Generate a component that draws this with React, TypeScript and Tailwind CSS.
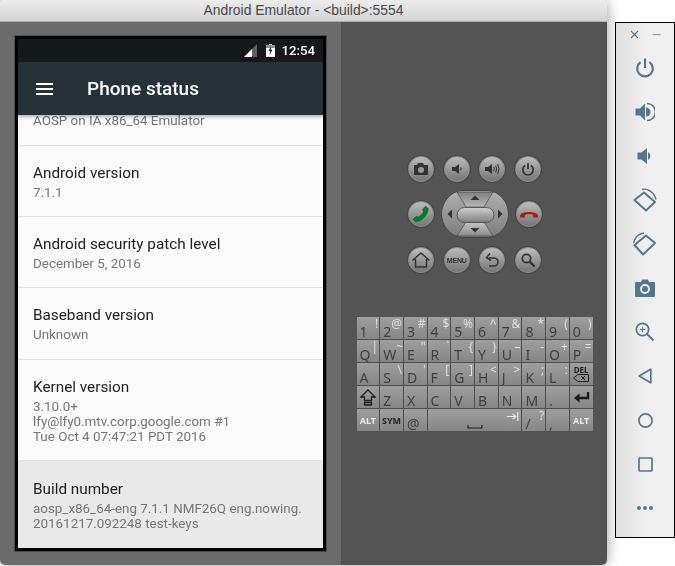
import React from "react";

const rows = [
  { t: "Android version", s: ["7.1.1"], h: "h-[71px]", bg: "" },
  { t: "Android security patch level", s: ["December 5, 2016"], h: "h-[71px]", bg: "" },
  { t: "Baseband version", s: ["Unknown"], h: "h-[72px]", bg: "" },
  { t: "Kernel version", s: ["3.10.0+", "lfy@lfy0.mtv.corp.google.com #1", "Tue Oct 4 07:47:21 PDT 2016"], h: "h-[101px]", bg: "" },
];

function Row({ t, s, h, bg }: { t: string; s: string[]; h: string; bg: string }) {
  return (
    <div className={`${h} ${bg} shrink-0 border-b border-[#e0e0e0] pl-[15px] pt-[16px]`}>
      <div className="text-[15.3px] leading-[22px] text-[#212121]">{t}</div>
      <div className="mt-[1px] text-[13.4px] leading-[15px] text-[#757575]">
        {s.map((l) => (
          <div key={l} className="whitespace-nowrap">{l}</div>
        ))}
      </div>
    </div>
  );
}

function Phone() {
  return (
    <div className="h-[515px] w-[311px] border-[3px] border-black ring-1 ring-[#4c4c4c] font-['Roboto',sans-serif] flex flex-col overflow-hidden bg-[#fafafa]">
      <div className="h-[23px] shrink-0 bg-[#15191c] flex items-center justify-end gap-[8px] pr-[8px] blur-[0.25px]">
        <svg width="14" height="14" viewBox="0 0 14 14">
          <path d="M0 13 L13 0 V13 Z" fill="#5a5f62" />
          <path d="M0 13 L8 5 V13 Z" fill="#fff" />
        </svg>
        <svg width="9" height="13" viewBox="0 0 9 13">
          <path d="M3 0 H6 V1 H9 V13 H0 V1 H3 Z" fill="#fff" />
          <path d="M0 1 H9 V4 H0 Z" fill="#8d9194" />
          <path d="M5 2 L2.6 7 H4.2 L3.6 11 L6.4 5.8 H4.8 Z" fill="#15191c" />
        </svg>
        <span className="text-[13.2px] font-medium text-white leading-none ml-[-1px]">12:54</span>
      </div>
      <div className="relative z-10 h-[53px] shrink-0 bg-[#263238] flex items-center shadow-[0_2px_3px_rgba(0,0,0,0.28)]">
        <div className="ml-[18px] w-[17px] flex flex-col gap-[3px]">
          <div className="h-[2px] bg-white" />
          <div className="h-[2px] bg-white" />
          <div className="h-[2px] bg-white" />
        </div>
        <div className="ml-[34px] pt-[2px] text-[19px] font-medium text-white blur-[0.25px]">Phone status</div>
      </div>
      <div className="blur-[0.25px] flex flex-col flex-1">
        <div className="h-[31px] shrink-0 border-b border-[#e0e0e0] pl-[15px] text-[13.4px] leading-[12px] text-[#757575]">
          AOSP on IA x86_64 Emulator
        </div>
        {rows.map((r) => (
          <Row key={r.t} {...r} />
        ))}
        <div className="flex-1 bg-[#e9e9e9] pl-[15px] pt-[17px]">
          <div className="text-[15.3px] leading-[22px] text-[#212121]">Build number</div>
          <div className="mt-[1px] text-[13.4px] leading-[15px] text-[#757575]">
            <div className="whitespace-nowrap">aosp_x86_64-eng 7.1.1 NMF26Q eng.nowing.</div>
            <div className="whitespace-nowrap">20161217.092248 test-keys</div>
          </div>
        </div>
      </div>
    </div>
  );
}

function Round({ children }: { children: React.ReactNode }) {
  return (
    <div className="h-[26px] w-[26px] shrink-0 rounded-full bg-linear-to-b from-[#bcbcbc] to-[#767676] border border-[#8e8e8e] shadow-[0_0_0_1px_#474747] flex items-center justify-center">
      {children}
    </div>
  );
}

const G = "#333333";

function DPad() {
  return (
    <svg width="68" height="48" viewBox="0 0 68 48" className="shrink-0">
      <defs>
        <linearGradient id="dpadBody" x1="0" y1="0" x2="0" y2="1">
          <stop offset="0" stopColor="#b0b0b0" />
          <stop offset="1" stopColor="#7c7c7c" />
        </linearGradient>
        <linearGradient id="dpadPill" x1="0" y1="0" x2="0" y2="1">
          <stop offset="0" stopColor="#cfcfcf" />
          <stop offset="1" stopColor="#7f7f7f" />
        </linearGradient>
        <linearGradient id="dpadTop" x1="0" y1="0" x2="0" y2="1">
          <stop offset="0" stopColor="#7e7e7e" />
          <stop offset="1" stopColor="#b9b9b9" />
        </linearGradient>
        <linearGradient id="dpadBot" x1="0" y1="0" x2="0" y2="1">
          <stop offset="0" stopColor="#c4c4c4" />
          <stop offset="1" stopColor="#8c8c8c" />
        </linearGradient>
      </defs>
      <path d="M22 0.5 H46 C58 0.5 67.5 12 67.5 24 C67.5 36 58 47.5 46 47.5 H22 C10 47.5 0.5 36 0.5 24 C0.5 12 10 0.5 22 0.5 Z" fill="url(#dpadBody)" stroke="#474747" />
      <path d="M16 2 H52 L43 17 H25 Z" fill="url(#dpadTop)" stroke="#474747" strokeWidth="0.7" />
      <path d="M25 32 H43 L52 46 H16 Z" fill="url(#dpadBot)" stroke="#474747" strokeWidth="0.7" />
      <rect x="16" y="17.5" width="37" height="15" rx="7.5" fill="url(#dpadPill)" stroke="#474747" strokeWidth="0.8" />
      <path d="M29.5 10 L34 5.5 L38.5 10 Z" fill={G} />
      <path d="M29.5 38 L38.5 38 L34 42.5 Z" fill={G} />
      <path d="M11 19.5 L11 28.5 L6.5 24 Z" fill={G} />
      <path d="M57 19.5 L61.5 24 L57 28.5 Z" fill={G} />
    </svg>
  );
}

function Controls() {
  return (
    <div className="flex flex-col items-center gap-[8px] blur-[0.3px]">
      <div className="flex gap-[9.6px]">
        <Round>
          <svg width="16" height="14" viewBox="0 0 16 14">
            <path d="M1 3 H4 L5 1 H10 L11 3 H15 V13 H1 Z" fill={G} />
            <circle cx="8" cy="8" r="3" fill="#9a9a9a" />
          </svg>
        </Round>
        <Round>
          <svg width="14" height="14" viewBox="0 0 14 14">
            <path d="M2 5 H5 L9 2 V12 L5 9 H2 Z" fill={G} />
            <path d="M10.5 5.5 Q11.7 7 10.5 8.5" stroke={G} strokeWidth="1.2" fill="none" />
          </svg>
        </Round>
        <Round>
          <svg width="17" height="14" viewBox="0 0 17 14">
            <path d="M1 5 H4 L8 2 V12 L4 9 H1 Z" fill={G} />
            <path d="M9.7 5 Q10.8 7 9.7 9 M11.7 3.5 Q13.5 7 11.7 10.5 M13.7 2 Q16.2 7 13.7 12" stroke={G} strokeWidth="1" fill="none" />
          </svg>
        </Round>
        <Round>
          <svg width="14" height="14" viewBox="0 0 14 14">
            <path d="M4.2 3.4 A5.2 5.2 0 1 0 9.8 3.4" stroke={G} strokeWidth="1.7" fill="none" />
            <path d="M7 1 V7" stroke={G} strokeWidth="1.7" />
          </svg>
        </Round>
      </div>
      <div className="flex items-center gap-[7px]">
        <Round>
          <svg width="20" height="20" viewBox="0 0 18 18">
            <path d="M13 1.5 L16 4 C15.5 10 10.5 15.5 4 16.5 L1.5 13.5 L5 10.5 L6.5 11.5 C8.5 10.5 10.5 8.5 11 6.5 L10 5 Z" fill="#0a7a2c" />
          </svg>
        </Round>
        <DPad />
        <Round>
          <svg width="20" height="10" viewBox="0 0 20 10">
            <path d="M1 7 C1 1.5 19 1.5 19 7 L19 8.5 L14.5 8.5 L13.5 5.5 C11 5 9 5 6.5 5.5 L5.5 8.5 L1 8.5 Z" fill="#ad1a1a" />
          </svg>
        </Round>
      </div>
      <div className="flex gap-[9.6px] mt-[1px]">
        <Round>
          <svg width="20" height="18" viewBox="0 0 20 18">
            <path d="M1.5 9.5 L10 2 L18.5 9.5 M4.5 8 V16 H15.5 V8" stroke={G} strokeWidth="1.5" fill="none" strokeLinejoin="round" />
          </svg>
        </Round>
        <Round>
          <span className="font-['Liberation_Sans',sans-serif] text-[7px] font-bold leading-none tracking-[-0.2px] text-[#333]">MENU</span>
        </Round>
        <Round>
          <svg width="16" height="16" viewBox="0 0 16 16">
            <path d="M5 6 H10 A4 4 0 0 1 10 14 H5" stroke={G} strokeWidth="1.6" fill="none" />
            <path d="M6 1.5 L2.5 5.5 L7 8.5" stroke={G} strokeWidth="1.6" fill="none" />
          </svg>
        </Round>
        <Round>
          <svg width="16" height="16" viewBox="0 0 16 16">
            <circle cx="6.5" cy="6.5" r="4.2" stroke={G} strokeWidth="1.8" fill="none" />
            <path d="M9.8 9.8 L14.5 14.5" stroke={G} strokeWidth="2.4" />
          </svg>
        </Round>
      </div>
    </div>
  );
}

function Key({ m, a, span, small, raw }: { m?: React.ReactNode; a?: React.ReactNode; span?: boolean; small?: boolean; raw?: boolean }) {
  const keyBase = "h-[22px] bg-linear-to-b from-[#9e9e9e] to-[#868686] flex";
  if (raw) {
    return <div className={`${span ? "col-span-4" : ""} ${keyBase}`}>{m}</div>;
  }
  if (small) {
    return <div className={`${keyBase} items-center justify-center leading-none`}>{m}</div>;
  }
  return (
    <div className={`${keyBase} justify-between pl-[3px] pr-[1px]`}>
      {m !== undefined && <span className="self-end text-[14px] leading-[14px] text-[#404040]">{m}</span>}
      {a !== undefined && <span className="self-start text-[12px] leading-[13px] text-[#dedede]">{a}</span>}
    </div>
  );
}

const row1: [string, string][] = [["1", "!"], ["2", "@"], ["3", "#"], ["4", "$"], ["5", "%"], ["6", "^"], ["7", "&"], ["8", "*"], ["9", "("], ["0", ")"]];
const row2: [string, string][] = [["Q", "|"], ["W", "~"], ["E", "\""], ["R", "`"], ["T", "{"], ["Y", "}"], ["U", "–"], ["I", "-"], ["O", "+"], ["P", "="]];
const row3: [string, string][] = [["A", ""], ["S", "\\"], ["D", "'"], ["F", "["], ["G", "]"], ["H", "<"], ["J", ">"], ["K", ";"], ["L", ":"]];
const row4: string[] = ["Z", "X", "C", "V", "B", "N", "M", "."];

function Keyboard() {
  const alt = <span className="text-[9px] font-bold text-[#e8e8e8]">ALT</span>;
  return (
    <div className="mt-[44px] w-[236px] bg-[#4d4d4d] grid grid-cols-10 gap-px font-['Noto_Sans',sans-serif] blur-[0.3px]">
      {row1.map(([m, a]) => <Key key={m} m={m} a={a} />)}
      {row2.map(([m, a]) => <Key key={m} m={m} a={a} />)}
      {row3.map(([m, a]) => <Key key={m} m={m} a={a} />)}
      <Key
        small
        m={
          <span className="flex flex-col items-center text-[8px] font-bold text-[#222]">
            DEL
            <svg width="16" height="8" viewBox="0 0 16 8">
              <path d="M5 0.5 H15.5 V7.5 H5 L0.5 4 Z" fill="none" stroke="#222" />
              <path d="M8 2 L12 6 M12 2 L8 6" stroke="#222" />
            </svg>
          </span>
        }
      />
      <Key
        small
        m={
          <svg width="16" height="17" viewBox="0 0 16 17">
            <path d="M8 1 L15 8 H11.5 V11.5 H4.5 V8 H1 Z M4.5 13.5 H11.5 V16 H4.5 Z" fill="none" stroke="#222" strokeWidth="1.3" />
          </svg>
        }
      />
      {row4.map((m) => <Key key={m} m={m} />)}
      <Key
        small
        m={
          <svg width="17" height="13" viewBox="0 0 17 13">
            <path d="M15 1 V7 H5" stroke="#1c1c1c" strokeWidth="2.4" fill="none" />
            <path d="M6.5 2.5 L1 7 L6.5 11.5 Z" fill="#1c1c1c" />
          </svg>
        }
      />
      <Key small m={alt} />
      <Key small m={<span className="text-[9px] font-bold text-[#222]">SYM</span>} />
      <Key m="@" />
      <Key
        raw
        span
        m={
          <svg width="94" height="22" viewBox="0 0 94 22">
            <path d="M40 16 V19 H54 V16" stroke="#222" strokeWidth="1.2" fill="none" />
            <path d="M90 3 V12 M79 7.5 H88 M85 5 L88 7.5 L85 10" stroke="#e8e8e8" strokeWidth="1.2" fill="none" />
          </svg>
        }
      />
      <Key m="/" a="?" />
      <Key m="," />
      <Key small m={alt} />
    </div>
  );
}

const C = "#587786";

function Slot({ children }: { children: React.ReactNode }) {
  return <div className="h-[44px] w-full shrink-0 flex items-center justify-center">{children}</div>;
}

function Sidebar() {
  return (
    <div className="relative mt-[22px] ml-[8px] h-[516px] w-[60px] shrink-0 border border-black bg-linear-to-r from-[#dedede] via-[#efefef] via-50% to-[#efefef] flex flex-col items-center">
      <div className="h-[23px] w-full shrink-0 flex items-start justify-center gap-[13px] pt-[7px]">
        <svg width="9" height="9" viewBox="0 0 9 9">
          <path d="M1 1 L8 8 M8 1 L1 8" stroke={C} strokeWidth="1.1" />
        </svg>
        <svg width="9" height="9" viewBox="0 0 9 9">
          <path d="M0.5 4.5 H8.5" stroke="#8fa3ad" strokeWidth="1.2" />
        </svg>
      </div>
      <Slot>
        <svg width="20" height="20" viewBox="0 0 20 20">
          <path d="M5.6 4.2 A7.8 7.8 0 1 0 14.4 4.2" stroke={C} strokeWidth="2.2" fill="none" />
          <path d="M10 0.5 V10" stroke={C} strokeWidth="2.2" />
        </svg>
      </Slot>
      <Slot>
        <svg width="20" height="20" viewBox="0 0 20 20">
          <path d="M0.5 6.5 H5 L10 1.5 V18.5 L5 13.5 H0.5 Z" fill={C} />
          <path d="M11 5.5 A4.5 4.5 0 0 1 11 14.5 Z" fill={C} />
          <path d="M12 1.5 A8.5 8.5 0 0 1 12 18.5" stroke={C} strokeWidth="1.6" fill="none" />
        </svg>
      </Slot>
      <Slot>
        <svg width="16" height="16" viewBox="0 0 16 16">
          <path d="M0.5 4.5 H4.5 L10 0 V16 L4.5 11.5 H0.5 Z" fill={C} />
          <path d="M11 4 A4.5 4.5 0 0 1 11 12 Z" fill={C} />
        </svg>
      </Slot>
      <Slot>
        <svg width="24" height="24" viewBox="0 0 24 24">
          <path d="M1.5 12 L11 4.5 L22 14 L13 22.5 Z" fill="none" stroke={C} strokeWidth="2" strokeLinejoin="round" />
          <path d="M9 1.5 C15 0 21 4 23 11.5" stroke={C} strokeWidth="1.4" fill="none" />
        </svg>
      </Slot>
      <Slot>
        <svg width="24" height="24" viewBox="0 0 24 24">
          <path d="M22 11 L13 3.5 L1.5 13 L10 22.5 Z" fill="none" stroke={C} strokeWidth="2" strokeLinejoin="round" />
          <path d="M0.5 11 C2 5 6 1.5 11 1" stroke={C} strokeWidth="1.4" fill="none" />
        </svg>
      </Slot>
      <Slot>
        <svg width="20" height="18" viewBox="0 0 20 18">
          <path d="M1 3 H6 L7 0.5 H13 L14 3 H19 Q20 3 20 4 V17 Q20 18 19 18 H1 Q0 18 0 17 V4 Q0 3 1 3 Z" fill={C} />
          <circle cx="10" cy="10" r="4" fill="none" stroke="#f0f0f0" strokeWidth="2" />
        </svg>
      </Slot>
      <Slot>
        <svg width="20" height="20" viewBox="0 0 20 20">
          <circle cx="7.5" cy="7.5" r="6.2" fill="none" stroke={C} strokeWidth="1.7" />
          <path d="M12 12 L18.5 18.5" stroke={C} strokeWidth="2" />
          <path d="M7.5 4.8 V10.2 M4.8 7.5 H10.2" stroke={C} strokeWidth="1.1" />
        </svg>
      </Slot>
      <Slot>
        <svg width="14" height="16" viewBox="0 0 14 16">
          <path d="M12.8 1.2 V14.8 L1.2 8 Z" fill="none" stroke={C} strokeWidth="1.7" strokeLinejoin="round" />
        </svg>
      </Slot>
      <Slot>
        <svg width="15" height="15" viewBox="0 0 15 15">
          <circle cx="7.5" cy="7.5" r="6.6" fill="none" stroke={C} strokeWidth="1.7" />
        </svg>
      </Slot>
      <Slot>
        <svg width="15" height="15" viewBox="0 0 15 15">
          <rect x="1" y="1" width="13" height="13" rx="0.8" fill="none" stroke={C} strokeWidth="1.7" />
        </svg>
      </Slot>
      <Slot>
        <svg width="16" height="4" viewBox="0 0 16 4">
          <circle cx="2" cy="2" r="2" fill={C} />
          <circle cx="8" cy="2" r="2" fill={C} />
          <circle cx="14" cy="2" r="2" fill={C} />
        </svg>
      </Slot>
    </div>
  );
}

export default function App() {
  return (
    <div className="flex h-[566px] w-[675px] overflow-hidden bg-white">
      <div className="relative flex h-[565px] w-[607px] shrink-0 flex-col overflow-hidden rounded-[5px] shadow-[0_0_14px_rgba(0,0,0,0.4)]">
        <div className="flex h-[22px] shrink-0 items-center justify-center border-b border-[#adadad] bg-linear-to-b from-[#ececec] to-[#d4d4d4] font-['Liberation_Sans',sans-serif] text-[13.9px] text-[#4a4a4a]">
          Android Emulator - &lt;build&gt;:5554
        </div>
        <div className="flex flex-1">
          <div className="w-[342px] shrink-0 border-r border-[#4f4f4f] bg-[#6b6b6b] pl-[15px] pt-[14px]">
            <Phone />
          </div>
          <div className="flex flex-1 flex-col items-center bg-[#545454] pt-[134px]">
            <Controls />
            <Keyboard />
          </div>
        </div>
      </div>
      <Sidebar />
    </div>
  );
}
